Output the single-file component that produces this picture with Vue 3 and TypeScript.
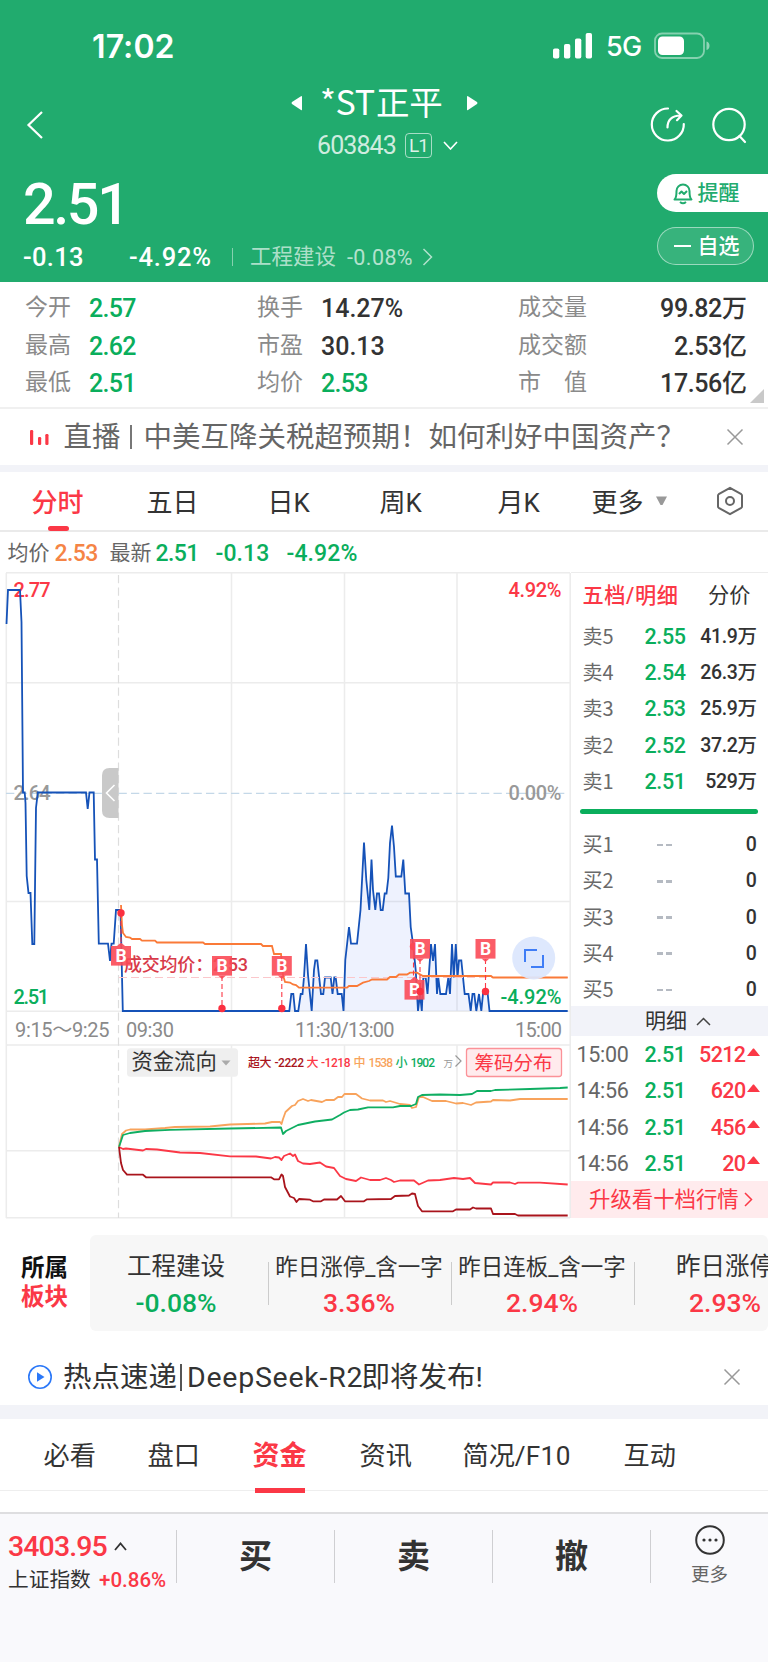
<script setup lang="ts">
type Pair = [label: string, value: string, tone?: string]

const stats: Pair[][] = [
  [['今开', '2.57', 'green'], ['换手', '14.27%'], ['成交量', '99.82万']],
  [['最高', '2.62', 'green'], ['市盈', '30.13'], ['成交额', '2.53亿']],
  [['最低', '2.51', 'green'], ['均价', '2.53', 'green'], ['市　值', '17.56亿']],
]
const asks = [
  ['卖5', '2.55', '41.9万'],
  ['卖4', '2.54', '26.3万'],
  ['卖3', '2.53', '25.9万'],
  ['卖2', '2.52', '37.2万'],
  ['卖1', '2.51', '529万'],
]
const bids = ['买1', '买2', '买3', '买4', '买5']
const trades = [
  ['15:00', '2.51', '5212'],
  ['14:56', '2.51', '620'],
  ['14:56', '2.51', '456'],
  ['14:56', '2.51', '20'],
]
const sectors = [
  { name: '工程建设', pct: '-0.08%', down: true, small: false },
  { name: '昨日涨停_含一字', pct: '3.36%', down: false, small: true },
  { name: '昨日连板_含一字', pct: '2.94%', down: false, small: true },
  { name: '昨日涨停', pct: '2.93%', down: false, small: false },
]
const priceLine =
  '6.5,624 8,590 20,590 21.5,622 23,792.5 24.7,792.5 25.5,803 26.7,876 28.5,893 30.5,893 32.3,944 34.3,944 36,808 37.8,792.5 86,792.5 87.7,809 89.5,792.5 93.7,792.5 95,859.5 97,859.5 98.8,943.7 108,943.7 110,961 111.5,943.7 113.7,943.7 116,910 120.5,910 122.8,1011 289.3,1011 291.3,994 293.3,994 295,1011 298.3,1011 300.7,994 302.5,994 304,977 306,944 308,975 311.7,1011 314,970 315.3,960.5 317.3,960.5 321,994 323.3,994 325,977.5 330.7,977.5 332.5,994 334.3,977.5 335.7,977.5 337.7,994 341.7,994 343.5,1011 345.3,960 349,927 351,943.7 357,943.7 360.5,910 364,842.5 366.3,880 369.3,910 371.5,859.5 373,890 375.3,910 377,893.5 379,893.5 380.7,910 382.7,910 384.7,893.5 386.5,893.5 388.3,878 390,843 392,825.5 394,847 395.8,876.5 401.3,876.5 403.3,859.5 405.3,893.5 409,893.5 410.7,927 413.3,946 415.7,970 418,1011 420,994 421.8,1011 423.3,977.5 425.7,977.5 427.5,994 431,944 433,961 435,944 437,994 438.3,977.5 440.3,994 446,994 448.3,977.5 450,994 452,944 453.8,977.5 455.8,944 457.5,977.5 459,960.5 461.3,960.5 464.7,994 468.5,994 470.7,1011 472.5,994 474.3,994 476.3,1011 479,994 481.3,1011 483,994 487.7,994 489.5,1011 567.7,1011'
const areaShape = '122.8,1011 ' + priceLine.slice(priceLine.indexOf('289.3,1011'))
const avgLine =
  '121,905 122,925 123,933 126,937 130,937.5 132,939 140,939 142,940.7 155,940.7 157,942.5 203,942.5 205,944 261,944 263,946 272,946 274,954 281,954 283,975 285,982 290,982.5 293,984.5 296,985 299,987.7 347,987.7 349,986 357,986 363,982.7 369,981 372,979.5 387,979.5 390,977 396,977 399,974.5 407,974.5 410,972.7 417,972.7 423,976 491,976 493,977.5 567.7,977.5'
const flows = [
  { color: '#f8a35c', pts: '119,1147 122,1134 126,1130.5 130,1129.5 145,1129.5 165,1128 175,1127 210,1126.5 230,1124.5 265,1123.5 272,1122 280,1122 281.5,1124 283,1119 285.5,1112 292,1106 295,1105 298,1101 303,1099 308,1101 311,1100 322,1102 326,1100 334,1100 338,1097 342,1097 344.5,1094 356,1094 362,1098.5 370,1100.5 383,1100.5 386,1102 390,1101 400,1104 410,1105 412,1108 416,1107 419,1097 423,1097 432,1101 446,1101 456,1103.5 463,1103 471,1105 476,1102.5 491,1101.5 493,1100 510,1100.5 520,1099 567.7,1099' },
  { color: '#0fae62', pts: '119,1147 123,1135 130,1133 145,1131 170,1129.8 230,1128.5 281,1127.5 283,1134 286,1131 298,1125 315,1121.5 332,1119.5 340,1115 344,1112.5 350,1110 358,1109.5 368,1107.3 393,1107.3 400,1106 411,1106 416,1104 418,1097 422,1095 440,1094.5 460,1095 472,1094 477,1091 491,1091 495,1090 530,1089 560,1088 567.7,1087.5' },
  { color: '#fb3846', pts: '119,1147 123,1149 126,1148.5 143,1150.5 146,1149 157,1149.5 180,1152.5 200,1153 230,1156.3 256,1156.5 271,1158.5 275,1157 279,1157.5 281.5,1160 284,1156 290,1153.5 293,1156 295,1154.5 298,1161 303,1163.5 310,1164 320,1162.5 326,1166.5 334,1168 340,1176 346,1179 356,1181 361,1177.5 370,1180 380,1180 386,1178 391,1180 394,1182 400,1180.5 414,1180.5 419,1184.5 428,1180.5 440,1180 454,1178 463,1179 470,1178 475,1183 491,1184.5 493,1182.5 510,1182.5 515,1184 518,1182.7 540,1182.7 567.7,1184.5' },
  { color: '#a9141c', pts: '119,1147 121,1163 123,1170 127,1174.7 143,1174.7 146,1177.3 271,1177.3 274,1179.3 279,1179.3 281.5,1174.5 283,1176 285,1187 290,1196.5 294,1198 296.5,1202 299,1199 310,1199.7 313,1201.3 321,1201.3 324,1199.5 337,1199.5 341,1196 345,1201.3 364,1201.3 367,1199.3 391,1199 395,1196 409,1195.5 412,1193.5 415,1194 418,1206 422,1211.3 453,1211.3 456,1209.5 470,1209.5 473,1207.5 476,1208.5 491,1208.5 493,1214 515,1214 518,1215.5 567.7,1215.5' },
]
// Trade markers: badge corner, dot centre, and whether the pointer is on the top edge
const marks = [
  { x: 111, y: 946, dx: 121, dy: 913, up: true },
  { x: 212, y: 956, dx: 222, dy: 1008.5, up: false },
  { x: 271.8, y: 956, dx: 281.8, dy: 1008.5, up: false },
  { x: 404.5, y: 980, dx: 413.5, dy: 946.5, up: true },
  { x: 410, y: 939, dx: 420, dy: 991.5, up: false },
  { x: 475.5, y: 939, dx: 485.5, dy: 991.5, up: false },
]
</script>

<template>
  <div class="phone">
    <header class="head">
      <div class="status">
        <span class="clock">17:02</span>
        <svg class="signal" width="40" height="26" fill="#fff">
          <rect x="0" y="15.5" width="6.3" height="10" rx="1.8" /><rect x="11" y="11" width="6.3" height="14.5" rx="1.8" />
          <rect x="22" y="5.5" width="6.3" height="20" rx="1.8" /><rect x="32.7" y="0" width="6.3" height="25.5" rx="1.8" />
        </svg>
        <span class="net">5G</span>
        <svg width="58" height="28" fill="none">
          <rect x="1" y="1.5" width="49" height="24.5" rx="7" stroke="#fff" stroke-opacity=".45" stroke-width="1.8" />
          <rect x="4" y="4.5" width="26" height="18.5" rx="4.5" fill="#fff" />
          <path d="M52.5 9.5c4 1 4 7.5 0 8.5z" fill="#fff" fill-opacity=".5" />
        </svg>
      </div>
      <div class="nav">
        <svg class="back" width="20" height="30"><path d="M16 2 2.5 15 16 28" fill="none" stroke="#fff" stroke-width="2.2" /></svg>
        <div class="title">
          <div class="name">
            <svg width="12" height="16"><path d="M11 2v12.5q0 1-1 .4L1 9Q0 8 1 7L10 1.2q1-.6 1 .8z" fill="#fff" /></svg>
            <span>*ST<em>正平</em></span>
            <svg width="12" height="16"><path d="M1 2v12.5q0 1 1 .4L11 9Q12 8 11 7L2 1.2q-1-.6-1 .8z" fill="#fff" /></svg>
          </div>
          <div class="code">
            <span class="digits">603843</span><span class="lv">L1</span>
            <svg width="15" height="9"><path d="M1 1 7.5 8 14 1" fill="none" stroke="#fff" stroke-width="1.6" /></svg>
          </div>
        </div>
        <svg class="actions" width="100" height="38" fill="none" stroke="#fff" stroke-width="2.2" stroke-linecap="round">
          <path d="M19 2.5A16 16 0 1 0 34.8 18" /><path d="M18.5 21.5q0-11.500 13-12M27.5 5l5 4.5-4.5 4.7" stroke-linejoin="round" />
          <circle cx="80" cy="18.5" r="15.7" /><path d="m90.5 30 5.5 6" />
        </svg>
      </div>
      <div class="quote">
        <div>
          <div class="price">2.51</div>
          <div class="change">
            <span class="d1">-0.13</span><span class="d2">-4.92%</span><i></i><span class="ind">工程建设</span><span class="d3">-0.08%</span>
            <svg width="11" height="18"><path d="m1.5 1 8 8-8 8" fill="none" stroke="#fff" stroke-opacity=".65" stroke-width="1.5" /></svg>
          </div>
        </div>
        <div class="pills">
          <div class="pill alert">
            <svg width="20" height="23" fill="none" stroke="#21ab6e" stroke-width="2" stroke-linejoin="round">
              <path d="M1.5 17.5Q3.5 16 3.5 9a6.5 6.5 0 0 1 13 0q0 7 2 8.5z" /><path d="M7 20q3 2.5 6 0M6 12l2.5-2.5L11 12l3-3" />
            </svg>
            提醒
          </div>
          <div class="pill self"><i></i>自选</div>
        </div>
      </div>
    </header>

    <section class="stats">
      <div v-for="(row, r) in stats" :key="r" class="srow">
        <template v-for="(c, i) in row" :key="i">
          <span class="lab">{{ c[0] }}</span><span class="val" :class="[c[2], { last: i === 2 }]">{{ c[1] }}</span>
        </template>
      </div>
      <svg class="corner" width="14" height="14"><path d="M14 0v14H0z" fill="#c9c9c9" /></svg>
    </section>

    <section class="news">
      <svg width="20" height="15" fill="#fb3846"><rect x="0" width="3.2" height="15" rx="1.2" /><rect x="8" y="7" width="3.2" height="8" rx="1.2" /><rect x="15.3" y="4" width="3.2" height="11" rx="1.2" /></svg>
      <span class="live">直播</span><i></i><span class="topic">中美互降关税超预期！如何利好中国资产？</span>
      <svg class="close" width="18" height="18"><path d="m1.5 1.5 15 15m0-15-15 15" stroke="#999" stroke-width="1.5" /></svg>
    </section>

    <nav class="periods">
      <span class="on">分时</span><span>五日</span><span>日K</span><span>周K</span><span>月K</span><span>更多</span>
      <svg width="13" height="10"><path d="M1 .5h11L7.5 9h-2z" fill="#999" /></svg>
      <svg width="28" height="30" fill="none" stroke="#666" stroke-width="2"><path d="m14 1.8 11.3 6.4q.7.5.7 1.3v11q0 .8-.7 1.3L14 28.2 2.7 21.8Q2 21.3 2 20.5v-11q0-.8.7-1.300z" stroke-linejoin="round" /><circle cx="14" cy="15" r="4" /></svg>
    </nav>

    <div class="info">
      <span>均价</span><b class="orange">2.53</b><span>最新</span><b class="green">2.51</b><b class="green wide">-0.13</b><b class="green wide">-4.92%</b>
    </div>

    <main class="board">
      <svg class="chart" viewBox="0 572 571 647" width="571" height="647">
        <g fill="none" stroke="#ececec" stroke-width="1.5">
          <path d="M6 572.7H570M6 682.7H570M6 901.5H570M6 1011.3H570M6 1045H570M6 1150.7H570M6 1217.7H570" />
          <path d="M6.3 573V1218M231.5 573V1011M231.5 1045V1218M344.5 573V1011M344.5 1045V1218M457 573V1011M457 1045V1218M570.2 573V1218" />
          <path d="M118.5 575V1218" stroke="#ddd" stroke-width="1.2" stroke-dasharray="8.3 4.2" />
          <path d="M6 793.3H568" stroke="#c4d8e8" stroke-width="1.200" stroke-dasharray="8.3 4.2" />
        </g>
        <g class="cn" font-size="20">
          <text x="13.5" y="596.5" fill="#fb3846" textLength="37">2.77</text>
          <text x="13.5" y="800" fill="#999" textLength="37">2.64</text>
          <text x="13.5" y="1003.5" fill="#0aae5c" textLength="35.5">2.51</text>
        </g>
        <path d="M118.5 768h-9q-7.500 0-7.500 7.500v35q0 7.500 7.500 7.500h9z" fill="#c9c9c9" />
        <path d="m114.5 785-8 8 8 8" fill="none" stroke="#fff" stroke-width="1.6" />
        <polygon :points="areaShape" fill="#3d73f0" fill-opacity=".09" />
        <polyline :points="priceLine" fill="none" stroke="#1552b8" stroke-width="1.8" />
        <path d="M119 977.5H568" stroke="#fbc7cb" stroke-width="1.2" stroke-dasharray="8 4" />
        <polyline :points="avgLine" fill="none" stroke="#fa7a38" stroke-width="1.8" />
        <text class="cn" x="124" y="970.5" font-size="18" fill="#d83a48" textLength="124">成交均价：2.53</text>
        <g v-for="m in marks" :key="m.x">
          <path :d="m.up ? `M${m.dx} ${m.dy}V${m.y}` : `M${m.dx} ${m.y + 20}V${m.dy}`" stroke="#fb3846" stroke-width="1.1" stroke-dasharray="5 3" />
          <rect :x="m.x" :y="m.y" width="20" height="19.6" fill="#fb4a56" fill-opacity=".9" />
          <path :d="m.up ? `M${m.x + 6} ${m.y}l4-3.5 4 3.5z` : `M${m.x + 6} ${m.y + 19.6}l4 3.5 4-3.5z`" fill="#fb4a56" fill-opacity=".9" />
          <text class="bd" :x="m.x + 10" :y="m.y + 15.8" text-anchor="middle">B</text>
          <circle :cx="m.dx" :cy="m.dy" r="3.7" fill="#fb3040" />
        </g>
        <circle cx="533.7" cy="958" r="21.5" fill="#dbe6fd" fill-opacity=".93" />
        <path d="M525 962V950h12M531 967h12v-12" fill="none" stroke="#3f7df6" stroke-width="2" />
        <g class="cn" font-size="20">
          <text x="508.5" y="596.5" fill="#fb3846" textLength="53">4.92%</text>
          <text x="508.5" y="800" fill="#999" textLength="53">0.00%</text>
          <text x="500.5" y="1003.5" fill="#0aae5c" textLength="61">-4.92%</text>
          <g fill="#8a8a8a" class="axis">
            <text x="15" y="1036.5" textLength="94.5">9:15～9:25</text><text x="126" y="1036.5" textLength="48">09:30</text>
            <text x="295" y="1036.5" textLength="99.5">11:30/13:00</text><text x="515" y="1036.5" textLength="47">15:00</text>
          </g>
        </g>
        <rect x="127" y="1048.2" width="111" height="28.5" rx="3.5" fill="#efefef" />
        <text class="zh" x="131.5" y="1069" font-size="21.3" fill="#333">资金流向</text>
        <path d="M221.5 1060.5h9l-4.5 5z" fill="#aaa" />
        <g class="leg" font-size="12">
          <text x="248" y="1066.5" fill="#a9141c" textLength="23.5">超大</text><text x="274.5" y="1066.5" fill="#a9141c" textLength="29.5">-2222</text>
          <text x="306.5" y="1066.5" fill="#fb3846">大</text><text x="321" y="1066.5" fill="#fb3846" textLength="29.5">-1218</text>
          <text x="353.5" y="1066.5" fill="#f8a35c">中</text><text x="368.5" y="1066.5" fill="#f8a35c" textLength="24.5">1538</text>
          <text x="395.5" y="1066.5" fill="#0fae62">小</text><text x="410.5" y="1066.5" fill="#0fae62" textLength="24.5">1902</text>
          <text class="zh wan" x="443.5" y="1066.5" fill="#999">万</text>
        </g>
        <path d="m455.5 1055.5 5.5 5.5-5.5 5.5" fill="none" stroke="#999" stroke-width="1.2" />
        <rect x="466.5" y="1048.5" width="95" height="28" rx="2.5" fill="#ffebed" stroke="#fb9298" stroke-width="1.3" />
        <text class="zh" x="474.5" y="1069.5" font-size="19.5" fill="#fb3846">筹码分布</text>
        <polyline v-for="f in flows" :key="f.color" :points="f.pts" fill="none" :stroke="f.color" stroke-width="1.8" stroke-linejoin="round" />
      </svg>

      <aside class="book">
        <div class="bhead"><b>五档/明细</b><span>分价</span></div>
        <div v-for="a in asks" :key="a[0]" class="brow"><span>{{ a[0] }}</span><b class="green">{{ a[1] }}</b><em>{{ a[2] }}</em></div>
        <div class="bar"></div>
        <div v-for="b in bids" :key="b" class="brow"><span>{{ b }}</span><i><u></u><u></u></i><em>0</em></div>
        <div class="detail">明细<svg width="15" height="9"><path d="M1 8 7.5 1.5 14 8" fill="none" stroke="#444" stroke-width="1.5" /></svg></div>
        <div class="trades">
          <div v-for="(t, i) in trades" :key="i" class="trow">
            <span>{{ t[0] }}</span><b class="green">{{ t[1] }}</b><em>{{ t[2] }}</em>
            <svg width="13" height="8"><path d="M0 8 6 .5h1L13 8z" fill="#fb3846" /></svg>
          </div>
        </div>
        <div class="upgrade">升级看十档行情<svg width="9" height="15"><path d="m1 1 6.5 6.5L1 14" fill="none" stroke="#fb3846" stroke-width="1.5" /></svg></div>
      </aside>
    </main>

    <section class="sector">
      <div class="slabel"><b>所属</b><b class="red">板块</b></div>
      <div class="cards">
        <div v-for="s in sectors" :key="s.pct" class="card">
          <span :class="{ small: s.small }">{{ s.name }}</span><b :class="s.down ? 'green' : 'red'">{{ s.pct }}</b>
        </div>
      </div>
    </section>

    <section class="hot">
      <svg width="26" height="26"><circle cx="13" cy="13" r="11.2" fill="none" stroke="#2b78f8" stroke-width="1.6" /><path d="M10 8.3v9.4l7.5-4.700z" fill="#2b78f8" /></svg>
      <span>热点速递</span><i></i><span class="ds">DeepSeek-R2</span><span>即将发布!</span>
      <svg class="close" width="18" height="18"><path d="m1.5 1.5 15 15m0-15-15 15" stroke="#999" stroke-width="1.5" /></svg>
    </section>

    <nav class="tabs">
      <span>必看</span><span>盘口</span><span class="on">资金</span><span>资讯</span><span>简况/<em>F10</em></span><span>互动</span>
    </nav>

    <footer class="foot">
      <div class="index">
        <div class="ix">3403.95<svg width="13" height="9"><path d="M1 8 6.5 1.5 12 8" fill="none" stroke="#333" stroke-width="1.8" /></svg></div>
        <div class="iy"><span>上证指数</span><b>+0.86%</b></div>
      </div>
      <div class="act">买</div><div class="act">卖</div><div class="act">撤</div>
      <div class="more">
        <svg width="32" height="32"><circle cx="16" cy="16" r="13.8" fill="none" stroke="#333" stroke-width="2" /><g fill="#333"><circle cx="10" cy="16" r="1.6" /><circle cx="16" cy="16" r="1.6" /><circle cx="22" cy="16" r="1.6" /></g></svg>
        <span>更多</span>
      </div>
    </footer>
  </div>
</template>

<style>
body { background: #fff; }
</style>

<style scoped>
* { box-sizing: border-box; }
svg { display: block; flex: none; }
i, em { font-style: normal; }
b { font-weight: 500; }
.phone { width: 768px; height: 1662px; overflow: hidden; background: #fff; color: #333; font-family: Roboto, "Noto Sans CJK SC", sans-serif; white-space: nowrap; }
.green { color: #0aae5c; }
.red { color: #fb3846; }
.orange { color: #f58445; }

.head { height: 282px; background: #21ab6e; color: #fff; }
.status { display: flex; align-items: center; height: 92px; padding-left: 92px; }
.clock { width: 461px; font: 600 32px/40px Inter, sans-serif; letter-spacing: .1px; padding-top: 1px; }
.signal { margin-right: 13px; }
.net { width: 48px; font: 500 27px/40px Inter, sans-serif; letter-spacing: -.6px; padding-top: 2px; }
.nav { display: flex; height: 78px; padding-left: 26px; }
.back { margin-top: 18px; }
.title { display: flex; flex-direction: column; width: 605px; padding-left: 245px; }
.name { display: flex; align-items: center; height: 22px; gap: 18px; font: 400 34px/22px "Noto Sans CJK SC", sans-serif; }
.name span { width: 128px; margin: -4px 0 0 -1px; letter-spacing: -.3px; }
.name em { font-size: 33.5px; margin-left: 1px; letter-spacing: 0; }
.code { display: flex; align-items: center; height: 26px; margin-top: 18px; padding-left: 26px; }
.digits { width: 88px; font-size: 25px; letter-spacing: -.9px; color: rgba(255,255,255,.8); }
.lv { width: 27px; height: 25px; margin-right: 11px; border: 1.5px solid rgba(255,255,255,.6); border-radius: 4px; font-size: 19px; line-height: 23px; text-align: center; color: rgba(255,255,255,.85); letter-spacing: -1px; }
.actions { margin: 14px 0 0 -2px; }
.quote { display: flex; justify-content: space-between; height: 112px; padding-left: 23px; }
.price { height: 66px; margin-top: 2px; font-size: 57.5px; font-weight: 500; line-height: 66px; letter-spacing: -2.4px; }
.change { display: flex; align-items: center; height: 28px; margin-top: 5px; }
.change i { width: 1px; height: 18px; margin-right: 17px; background: rgba(255,255,255,.45); }
.d1, .d2 { font-size: 25.5px; font-weight: 500; }
.d1 { width: 106px; letter-spacing: .3px; }
.d2 { width: 103px; letter-spacing: .8px; }
.ind { width: 97px; font-size: 21.5px; line-height: 28px; color: rgba(255,255,255,.65); }
.d3 { width: 75px; font-size: 21.5px; letter-spacing: .4px; color: rgba(255,255,255,.68); }
.pills { width: 111.500px; padding-top: 4px; }
.pill { display: flex; align-items: center; height: 38px; padding-left: 16px; border-radius: 19px; font-size: 21px; font-weight: 500; line-height: 36px; }
.alert { gap: 5px; border-radius: 19px 0 0 19px; background: #fff; color: #21ab6e; }
.self { width: 97px; margin-top: 15px; border: 1.5px solid rgba(255,255,255,.5); background: rgba(255,255,255,.1); }
.self i { width: 17px; height: 2px; margin-right: 7px; background: #fff; }

.stats { position: relative; height: 127px; padding: 7px 0 0 25px; border-bottom: 2px solid #f0f0f0; }
.srow { display: grid; grid-template-columns: 64px 168px 64px 197px 70px 158.5px; align-items: center; height: 37.7px; line-height: 37px; }
.lab { font-size: 23px; color: #8a8a8a; padding-bottom: 4px; }
.val { font-size: 25px; font-weight: 500; padding-bottom: 2px; }
.val.last { text-align: right; letter-spacing: -.4px; }
.val.green { letter-spacing: -.7px; }
.corner { position: absolute; right: 4px; bottom: 4px; }

.news { display: flex; align-items: center; height: 56px; padding-left: 30px; font-size: 28.5px; color: #666; line-height: 54px; }
.news span { padding-top: 2px; }
.news i { width: 2px; height: 24px; margin: 0 12px 0 9px; background: #777; }
.live { margin-left: 13.5px; }
.news .close { margin-left: 41px; }
.topic { width: 541.5px; }

.periods { display: grid; grid-template-columns: 115px 121px 112px 118px 94px 63px 61px 28px; align-items: center; height: 67px; padding-left: 31.5px; border-top: 7px solid #f2f3f8; border-bottom: 2px solid #eaeaea; font-size: 26px; line-height: 54px; }
.periods span { padding-top: 3px; }
.periods .on { position: relative; color: #fb3846; font-weight: 500; }
.periods .on::after { content: ""; position: absolute; left: 16px; bottom: -1px; width: 21px; height: 5px; border-radius: 2.5px; background: #fb3846; }

.info { display: grid; grid-template-columns: 47px 55px 46px 60px 71px 80px; align-items: center; height: 40px; padding-left: 7.5px; font-size: 21px; line-height: 38px; color: #666; }
.info b { font-size: 23px; letter-spacing: -.6px; padding-top: 3px; }
.info b.wide { letter-spacing: .1px; }

.board { display: flex; height: 647px; }
.cn { font-family: Roboto, "Noto Sans CJK SC", sans-serif; font-weight: 500; }
.axis { font-weight: 400; }
.zh { font-family: "Noto Sans CJK SC", sans-serif; font-weight: 400; }
.leg { font-family: Roboto, "Noto Sans CJK SC", sans-serif; font-weight: 500; }
.wan { font-size: 9.5px; }
.bd { font: 700 17.5px Roboto, sans-serif; fill: #fff; }
.book { width: 197px; border-top: 1.5px solid #ececec; }
.bhead { display: flex; justify-content: space-between; height: 44px; padding: 3px 17.5px 0 11.5px; font-size: 21.2px; line-height: 39px; }
.bhead b { color: #fb3846; letter-spacing: .6px; }
.brow { display: grid; grid-template-columns: 62px 50px 62px; align-items: center; height: 36.2px; padding: 2px 0 0 11.5px; line-height: 34px; }
.brow span { font: 400 20px/34px "Noto Sans CJK SC", sans-serif; color: #6a6a6a; padding-bottom: 2px; }
.brow b, .trow b { font-size: 21.5px; letter-spacing: -.4px; }
.brow em { font-size: 19.5px; font-weight: 500; text-align: right; letter-spacing: -.4px; }
.brow i { display: flex; gap: 3px; padding-left: 12px; }
.brow u { width: 6px; height: 2.5px; background: #b5bac2; }
.bar { width: 178px; height: 5px; margin: 10.7px 0 11.5px 9px; border-radius: 3px; background: #0aae5c; }
.detail { display: flex; align-items: center; gap: 9px; height: 30px; padding-left: 74px; background: #f2f3f9; font-size: 21px; line-height: 28px; }
.trades { height: 145px; }
.trow { display: grid; grid-template-columns: 68px 45px 56px 13px; align-items: center; height: 36.2px; padding: 1px 0 0 5.5px; line-height: 35px; }
.trow span { font-size: 21.5px; color: #666; letter-spacing: -.3px; }
.trow em { font-size: 21.5px; font-weight: 500; text-align: right; color: #fb3846; letter-spacing: -.6px; }
.trow svg { margin: -6px 0 0 1px; }
.upgrade { display: flex; align-items: center; gap: 5px; height: 37px; padding-left: 18px; background: #ffebed; color: #fb3846; font-size: 21.4px; line-height: 36px; }

.sector { display: flex; height: 129px; padding-top: 16px; }
.slabel { display: flex; flex-direction: column; width: 90px; padding: 19px 0 0 21px; font-size: 23.5px; line-height: 28.5px; color: #111; }
.slabel b { font-weight: 700; }
.slabel .red { color: #fb3846; }
.cards { display: flex; width: 678px; height: 96px; overflow: hidden; border-radius: 6px; background: #f7f7f7; }
.card { position: relative; left: -5.5px; display: flex; flex: none; flex-direction: column; align-items: center; width: 183px; padding-top: 15px; }
.card + .card::before { content: ""; position: absolute; left: 0; top: 27px; width: 1px; height: 43px; background: #ccc; }
.card span { font-size: 24.5px; line-height: 34px; }
.card span.small { font-size: 22.5px; }
.card b { font-size: 26.5px; line-height: 32px; margin-top: 3px; }

.hot { display: flex; align-items: center; height: 56px; margin-top: 1px; padding-left: 27px; font-size: 28.5px; line-height: 54px; }
.hot span { padding-top: 2px; }
.hot svg + span { margin-left: 10px; }
.hot i { width: 2px; height: 27px; margin: 0 5px 0 3px; background: #555; }
.ds { width: 174.5px; font-size: 28.5px; letter-spacing: .75px; }
.hot .close { margin-left: auto; margin-right: 27px; }

.tabs { display: grid; grid-template-columns: 104px 105px 107px 103px 161px 100px; height: 86px; padding-left: 43.5px; border-top: 14px solid #f2f3f8; border-bottom: 1.5px solid #eee; font-size: 26.2px; line-height: 74px; }
.tabs em { letter-spacing: .4px; }
.tabs .on { position: relative; color: #fb3846; font-weight: 700; font-size: 27px; }
.tabs .on::after { content: ""; position: absolute; left: 2px; bottom: 0; width: 50px; height: 5px; background: #fb3846; }

.foot { display: flex; height: 150px; margin-top: 21px; border-top: 2px solid #dedee0; background: #f9f9fc; }
.index { width: 176px; padding: 14px 0 0 8px; }
.ix { display: flex; align-items: center; gap: 7px; height: 36px; color: #fb3846; font-size: 28.5px; font-weight: 500; letter-spacing: -.9px; }
.iy { display: flex; align-items: center; height: 31px; }
.iy span { width: 91px; font-size: 20.7px; line-height: 28px; }
.iy b { font-size: 20.5px; color: #fb3846; }
.act { width: 158px; height: 53px; margin-top: 16px; border-left: 1px solid #cfcfd2; text-align: center; font-size: 33px; font-weight: 700; line-height: 54px; }
.more { display: flex; flex-direction: column; align-items: center; width: 118px; height: 53px; margin-top: 16px; border-left: 1px solid #cfcfd2; font-size: 18.5px; line-height: 28px; color: #666; }
.more svg { margin-top: -6px; }
.more span { margin-top: 5px; }
</style>
